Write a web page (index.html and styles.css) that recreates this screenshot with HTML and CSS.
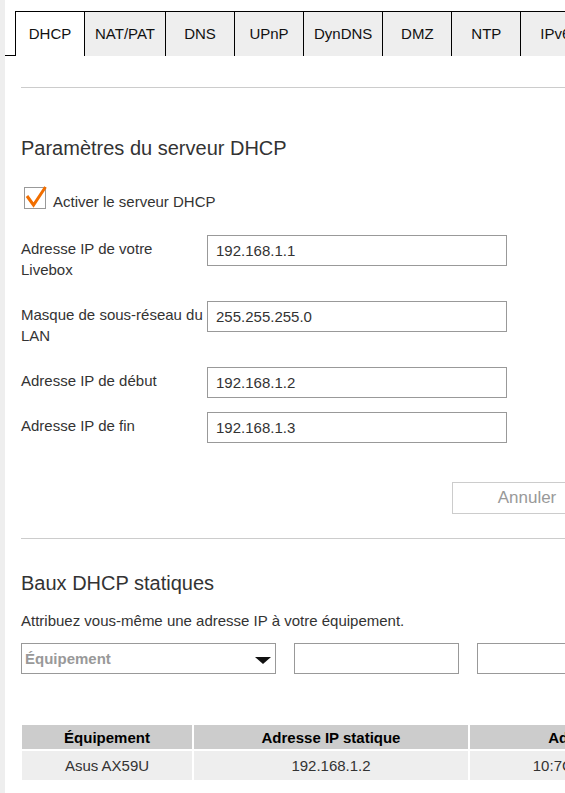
FILE: index.html
```html
<!DOCTYPE html>
<html lang="fr">
<head>
  <meta charset="UTF-8">
  <meta name="viewport" content="width=device-width, initial-scale=1.0">
  <title>Livebox - DHCP</title>
  <link rel="stylesheet" href="styles.css">
</head>
<body>
  <div class="page">
    <div class="rail"></div>
    <div class="main">
      <div class="tabs">
        <div class="tab-edge"></div>
        <div class="tab active">DHCP</div>
        <div class="tab">NAT/PAT</div>
        <div class="tab">DNS</div>
        <div class="tab">UPnP</div>
        <div class="tab">DynDNS</div>
        <div class="tab">DMZ</div>
        <div class="tab">NTP</div>
        <div class="tab">IPv6</div>
      </div>

      <div class="content">
        <hr class="sep sep-first">

        <h2 class="title title-first">Paramètres du serveur DHCP</h2>

        <label class="check-row">
          <span class="checkbox">
            <svg viewBox="0 0 22 22" width="22" height="22"><polyline points="3,9 9.5,18 21.5,0" /></svg>
          </span>
          <span class="check-text">Activer le serveur DHCP</span>
        </label>

        <div class="field">
          <label>Adresse IP de votre Livebox</label>
          <input type="text" value="192.168.1.1">
        </div>
        <div class="field">
          <label>Masque de sous-réseau du LAN</label>
          <input type="text" value="255.255.255.0">
        </div>
        <div class="field">
          <label>Adresse IP de début</label>
          <input type="text" value="192.168.1.2">
        </div>
        <div class="field">
          <label>Adresse IP de fin</label>
          <input type="text" value="192.168.1.3">
        </div>

        <div class="actions">
          <button class="btn">Annuler</button>
          <button class="btn">Enregistrer</button>
        </div>

        <hr class="sep sep-second">

        <h2 class="title title-second">Baux DHCP statiques</h2>
        <p class="hint">Attribuez vous-même une adresse IP à votre équipement.</p>

        <div class="add-row">
          <div class="select">
            <span>Équipement</span>
            <span class="caret"></span>
          </div>
          <input type="text" class="short">
          <input type="text" class="short">
        </div>

        <table class="leases">
          <tr>
            <th>Équipement</th>
            <th>Adresse IP statique</th>
            <th>Adresse MAC</th>
          </tr>
          <tr>
            <td>Asus AX59U</td>
            <td>192.168.1.2</td>
            <td>10:7C:61:A2:4E:B8</td>
          </tr>
        </table>
      </div>
    </div>
  </div>
</body>
</html>
```

FILE: styles.css
```css
body {
  margin: 0;
  overflow: hidden;
  font-family: "Liberation Sans", Arial, sans-serif;
  color: #333;
  background: #fff;
}

.page {
  display: flex;
  min-height: 100vh;
}

.rail {
  flex: none;
  width: 5px;
  background: #eeeeee;
}

.main {
  flex: none;
  width: 800px;
}

/* tabs */
.tabs {
  display: flex;
  padding-top: 11px;
}

.tab-edge {
  width: 10px;
  height: 44px;
  border-bottom: 1px solid #000;
}

.tab {
  box-sizing: border-box;
  min-width: 69px;
  height: 45px;
  padding: 0 10px;
  border-top: 1px solid #000;
  border-left: 1px solid #000;
  background: #eeeeee;
  color: #111;
  font-size: 15px;
  line-height: 44px;
  text-align: center;
}

.tab.active {
  background: #fff;
}

/* content */
.content {
  width: 741px;
  margin-left: 16px;
}

.sep {
  border: 0;
  border-top: 1px solid #cccccc;
  margin: 0;
}

.sep-first { margin-top: 31px; }
.sep-second { margin-top: 24px; }

.title {
  margin: 0;
  font-size: 20px;
  font-weight: normal;
  line-height: 24px;
  color: #333;
}

.title-first { margin-top: 48px; }
.title-second { margin-top: 32px; }

.check-row {
  display: flex;
  align-items: flex-start;
  margin: 27px 0 23px;
  font-size: 15px;
  line-height: 21px;
}

.check-text {
  margin-top: 4px;
}

.checkbox {
  position: relative;
  display: inline-block;
  box-sizing: border-box;
  width: 22px;
  height: 22px;
  margin: 0 7px 0 3px;
  border: 1px solid #999;
}

.checkbox svg {
  position: absolute;
  left: -1px;
  top: -1px;
  overflow: visible;
}

.checkbox polyline {
  fill: none;
  stroke: #f16e00;
  stroke-width: 3;
}

.field {
  display: flex;
  align-items: flex-start;
  margin-bottom: 14px;
}

.field label {
  width: 183px;
  margin-right: 3px;
  padding: 3px 0 7px;
  font-size: 15px;
  line-height: 21px;
}

input {
  box-sizing: border-box;
  width: 300px;
  height: 31px;
  margin: 0;
  padding: 0 8px;
  border: 1px solid #999;
  border-radius: 0;
  font-family: inherit;
  font-size: 15px;
  color: #333;
  outline: none;
}

.actions {
  display: flex;
  justify-content: flex-end;
  gap: 10px;
  margin-top: 39px;
}

.btn {
  width: 150px;
  height: 32px;
  border: 1px solid #cccccc;
  background: #fff;
  color: #999;
  font-family: inherit;
  font-size: 17px;
}

.hint {
  margin: 15px 0 0;
  font-size: 15px;
  line-height: 21px;
}

.add-row {
  display: flex;
  gap: 18px;
  margin-top: 12px;
}

.select {
  box-sizing: border-box;
  display: flex;
  align-items: center;
  justify-content: space-between;
  width: 255px;
  height: 31px;
  padding: 0 3px 0 3px;
  border: 1px solid #999;
  color: #999;
  font-size: 15px;
  font-weight: bold;
}

.caret {
  width: 0;
  height: 0;
  border-left: 8px solid transparent;
  border-right: 8px solid transparent;
  border-top: 7px solid #111;
  margin: 3px 1px 0 0;
}

input.short {
  width: 165px;
}

/* static leases */
.leases {
  width: 706px;
  margin: 49px 0 0 -1px;
  border-collapse: separate;
  border-spacing: 2px;
  table-layout: fixed;
  font-size: 15px;
}

.leases th {
  height: 24px;
  padding: 0;
  background: #cccccc;
  color: #000;
  font-weight: bold;
}

.leases td {
  height: 29px;
  padding: 0;
  background: #eeeeee;
  text-align: center;
  color: #333;
}

.leases th:nth-child(1) { width: 170px; }
.leases th:nth-child(2) { width: 274px; }
```
